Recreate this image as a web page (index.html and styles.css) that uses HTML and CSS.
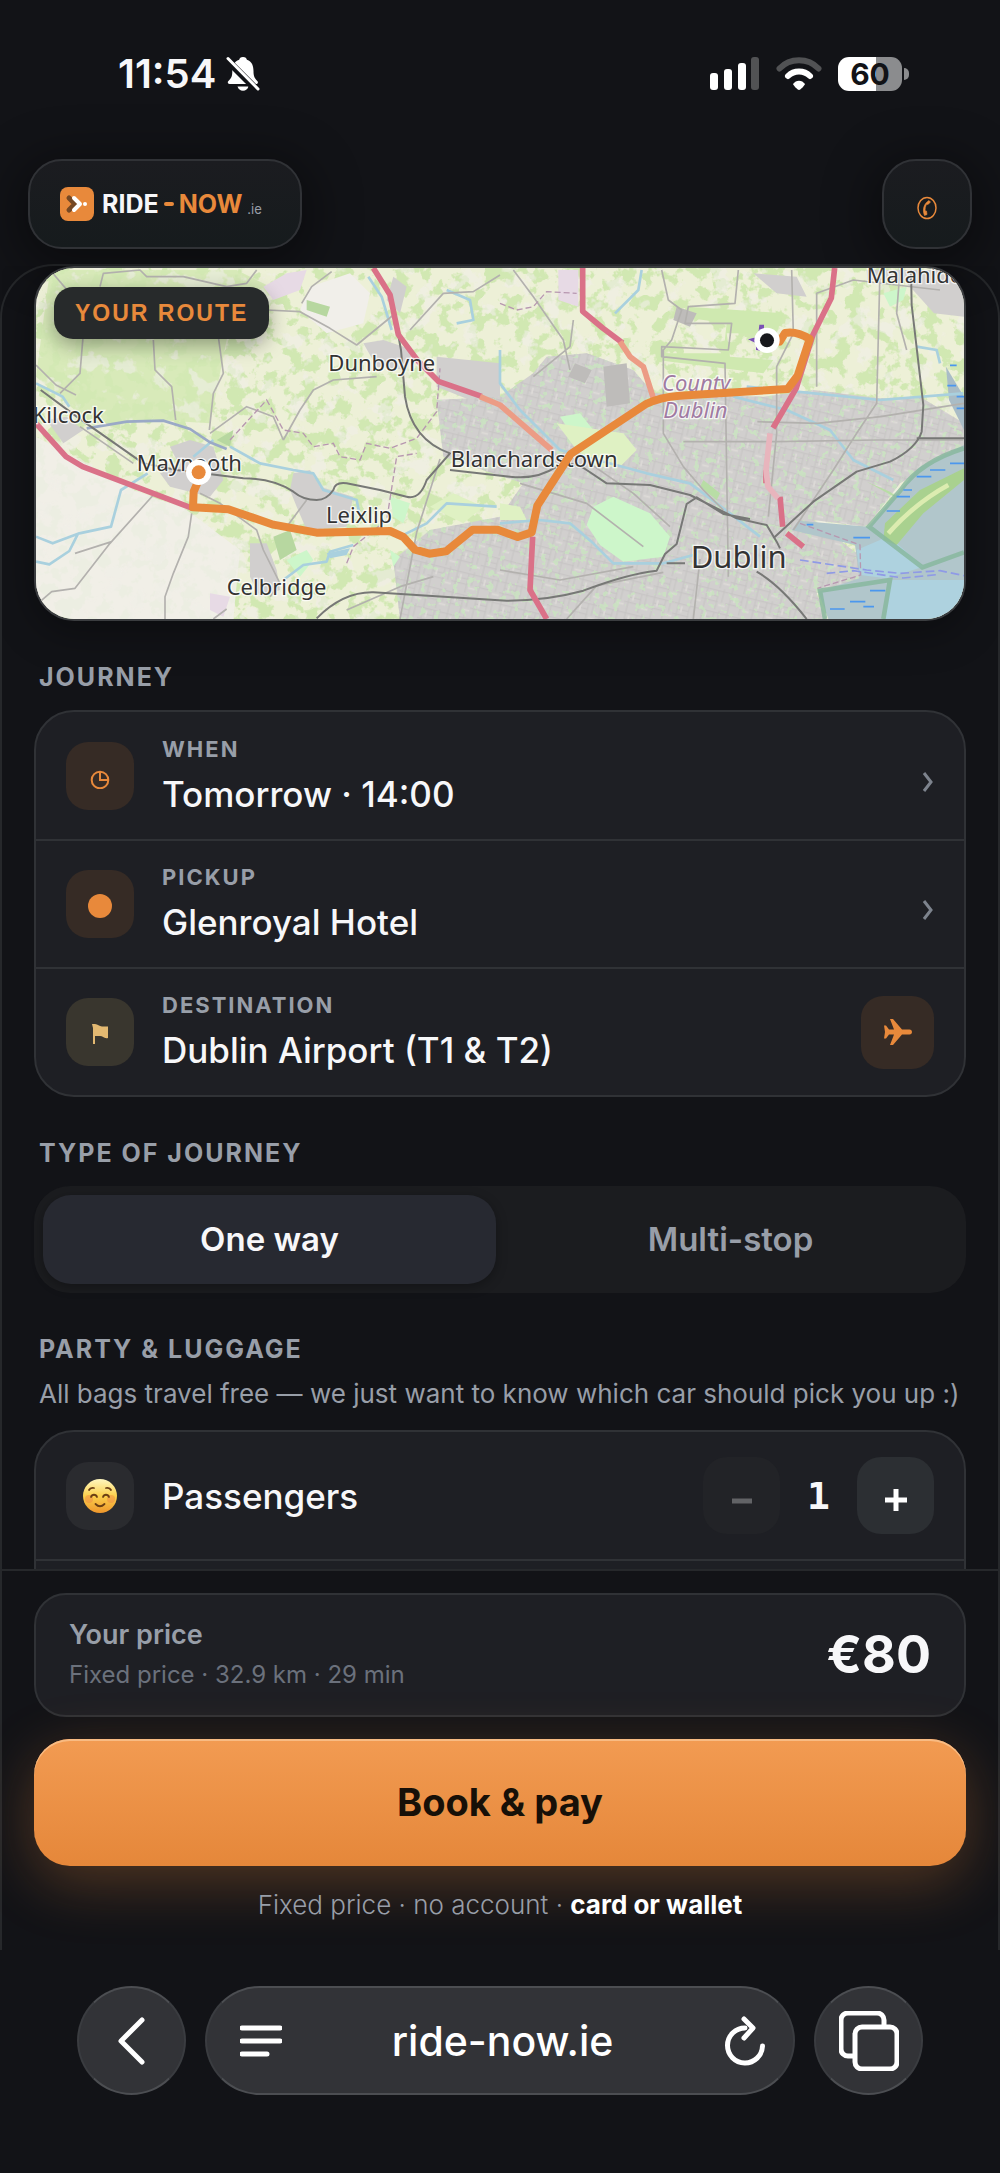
FILE: index.html
```html
<!DOCTYPE html>
<html lang="en">
<head>
<meta charset="utf-8">
<meta name="viewport" content="width=device-width, initial-scale=1">
<title>RIDE-NOW.ie</title>
<link rel="stylesheet" href="styles.css">
</head>
<body>
<div class="app">
  <div class="status">
    <div class="status-group">
      <span class="time">11:54</span>
      <svg width="34" height="36" viewBox="0 0 34 36" fill="#fff" aria-hidden="true">
        <path d="M17 1c2.500 0 3.600 1.400 3.900 2.700C26 5.200 27.500 10 27.500 15c0 6 1.500 7.500 4 10.200.9 1.200.3 2.800-1.200 2.800H3.500C2 28 1.200 26.400 2.200 25.200 5 22.500 6.300 21 6.300 15c0-5 1.700-9.800 6.900-11.300C13.500 2.400 14.500 1 17 1z"/>
        <path d="M11.500 30.500h11c-.7 2.500-2.800 4.200-5.500 4.200s-4.800-1.700-5.500-4.200z"/>
        <path d="M2 5l31 31" stroke="#121317" stroke-width="7"/>
        <path d="M2 2.500l30 30.500" stroke="#fff" stroke-width="3" stroke-linecap="round"/>
      </svg>
    </div>
    <div class="status-group status-right">
      <svg width="50" height="34" viewBox="0 0 50 34" fill="#fff" aria-hidden="true">
        <rect y="16" width="8" height="17" rx="3"/><rect x="14" y="12" width="8" height="21" rx="3"/>
        <rect x="28" y="6" width="8" height="27" rx="3"/><rect x="41" width="8" height="33" rx="3" fill="#515254"/>
      </svg>
      <svg width="46" height="34" viewBox="0 0 46 34" fill="none" stroke-linecap="round" aria-hidden="true">
        <path d="M3.500 11.500C14 .5 32 .5 42.500 11.500" stroke="#515254" stroke-width="6"/>
        <path d="M12 19c6-6 16-6 22 0" stroke="#fff" stroke-width="6"/>
        <path d="M17 27c3-4.500 9-4.500 12 0 0 1-4.500 6-6 6s-6-5-6-6z" fill="#fff"/>
      </svg>
      <div class="battery"><span class="battery-level">60</span></div>
    </div>
  </div>

  <header class="header">
    <a class="brand glass" href="#" aria-label="RIDE-NOW.ie">
      <svg width="34" height="34" viewBox="0 0 34 34" fill="none" aria-hidden="true">
        <rect width="34" height="34" rx="8" fill="#e8893b"/>
        <path d="M9 11l6 6-6 6" stroke="#754824" stroke-width="5" stroke-linecap="round" stroke-linejoin="round"/>
        <path d="M14 11l6 6-6 6" stroke="#fff" stroke-width="4" stroke-linecap="round" stroke-linejoin="round"/>
        <circle cx="25" cy="17" r="2" fill="#fff"/>
      </svg>
      <span class="brand-name">RIDE</span><span class="brand-dash"></span><span class="brand-name accent">NOW</span><span class="brand-tld">.ie</span>
    </a>
    <button class="call glass" type="button" aria-label="Call us">
      <svg width="22" height="24" viewBox="0 0 22 24" fill="none" stroke="#e8893b" aria-hidden="true">
        <ellipse cx="11" cy="12" rx="9" ry="10.500" stroke-width="1.500"/>
        <path d="M13 4.500c-5 3-7 9-4.500 15l2.500-1-.5-3.500-1.200.3c-.5-2.500 0-5 1.500-7.300l1.200.6 2.500-2.600z" fill="#e8893b" stroke-width=".6"/>
      </svg>
    </button>
  </header>

  <main class="sheet">
    <div class="scroll">
      <section class="map">
        <svg class="map-art" viewBox="108 54 2784 1053" preserveAspectRatio="xMidYMid slice" role="img" aria-label="Route map">
          <defs>
            <filter id="fields" x="0" y="0" width="100%" height="100%" color-interpolation-filters="sRGB">
              <feTurbulence type="fractalNoise" baseFrequency=".022" numOctaves="4" seed="8"/>
              <feColorMatrix values="0 0 0 0 .82  0 0 0 0 .91  0 0 0 0 .70  12 0 0 0 -6"/>
            </filter>
            <filter id="bare" x="0" y="0" width="100%" height="100%" color-interpolation-filters="sRGB">
              <feTurbulence type="fractalNoise" baseFrequency=".016" numOctaves="4" seed="31"/>
              <feColorMatrix values="0 0 0 0 .945  0 0 0 0 .935  0 0 0 0 .91  0 12 0 0 -7"/>
            </filter>
            <filter id="parks" x="0" y="0" width="100%" height="100%" color-interpolation-filters="sRGB">
              <feTurbulence type="fractalNoise" baseFrequency=".05" numOctaves="3" seed="4"/>
              <feColorMatrix values="0 0 0 0 .79  0 0 0 0 .91  0 0 0 0 .75  0 0 14 0 -8.400"/>
            </filter>
            <pattern id="streets" width="74" height="66" patternUnits="userSpaceOnUse" patternTransform="rotate(14)">
              <path d="M0 8H74M0 41H50M12 0V66M47 8V66M62 0V41M12 25H47" fill="none" stroke="#c6c4c3" stroke-width="3"/>
              <path d="M24 14v20M54 50h20" stroke="#dedbd8" stroke-width="5"/>
            </pattern>
            <clipPath id="town">
              <path d="M1310 450L1500 440 1600 370 1640 320 1760 310 1900 360 1960 430 2290 440 2440 420 2640 445 2760 440 2892 520V590L2700 700 2600 830 2440 810 2570 910 2580 985 2450 1030 2480 1107H1200L1180 930 1290 840 1500 800 1570 700 1330 620z"/>
            </clipPath>
          </defs>
          <rect x="108" y="54" width="2784" height="1053" fill="#edf0d7"/>
          <rect x="108" y="54" width="2784" height="1053" filter="url(#fields)"/>
          <path d="M108 560L400 720 560 780 720 900 700 1107H108z" fill="#f1efea" opacity=".85"/>
          <path d="M150 60h560l120 60-140 100-60 300-160-10-200 10-162-140z" fill="#d3e9b4" opacity=".85"/>
          <rect x="108" y="54" width="2784" height="1053" filter="url(#bare)" opacity=".6"/>
          <path d="M930 110l120-40 60 60-20 90-110 30-80-70z" fill="#f1efea"/>
          <path d="M920 150l70 20-10 30-60-20zM820 860l50-20 20 60-50 30zM650 570l50-30-10 50z" fill="#b7d7a0"/>
          <path d="M790 110l70-40 60-10-20 60-80 30zM1675 60h60v110l-60-20zM630 1030l60 10-20 60-40-20z" fill="#e7dae5"/>
          <g fill="#d1cfce">
            <path d="M1310 450L1500 440 1600 370 1640 320 1760 310 1900 360 1960 430 2290 440 2440 420 2640 445 2760 440 2892 520V590L2700 700 2600 830 2440 810 2570 910 2580 985 2450 1030 2480 1107H1200L1180 930 1290 840 1500 800 1570 700 1330 620z"/>
            <path d="M1310 320l190 20v100l-90 10-100-40zM1180 80l40 30-20 80-40-40zM510 590l60-20 70 20 30 100-40 50-120-30-30-40 60-20zM880 670l50-10 30 50 100 30-20 90-120 10-30-70-20-50zM750 880l50 0 30 80 10 60-60 20-30-60zM140 510l60-10 50 40-60 40zM2260 70l130 10 30 60-90-10zM2600 60h292v140l-90-10-90-100h-110zM1090 280l60-10 90 30-20 60-90-10z"/>
          </g>
          <g clip-path="url(#town)">
            <rect x="1170" y="300" width="1730" height="810" fill="url(#streets)"/>
            <rect x="1170" y="300" width="1730" height="810" filter="url(#parks)" opacity=".7"/>
          </g>
          <path d="M1780 770l60-30 110 50 60 70-20 60-120 15-70-50-40-60zM860 930l60-30 20 30-40 50zM1170 740l60 20-20 60-30-20zM1170 900l30 20-20 30zM2650 130l70-20-10 40-40 20zM1680 500l60-10 40 50-60 20z" fill="#cdf6ca"/>
          <path d="M1500 760l60 10 20 40-80 0zM1670 520l200 30 40 50-50 50-70 0-60-50zM1290 770l70-40 90 40-60 50z" fill="#dff1c3"/>
          <path d="M2060 170l150 10 140 10-20 60-150 0 10 70 130 10-30 40-320-40 10-20 190 0 10-90-140-20z" fill="#cfe9b0"/>
          <path d="M1810 350l70-10 10 120-70 10zM2030 170l60 20-20 40-50-20zM1725 340l50 20-20 40-50-20z" fill="#bebcba"/>
          <path d="M2600 695l70 30 40 30M2110 690l50 40-10 20-50-40z" fill="#b8dda5"/>

          <!-- water -->
          <path d="M2892 585L2760 650 2700 720 2605 830 2395 812 2375 840 2565 885 2578 985 2455 1025 2485 1107H2892z" fill="#b1c6cb"/>
          <path d="M2892 680L2770 780 2690 880 2770 950 2660 985 2580 975 2570 900 2640 870 2892 655zM2675 990H2892V1107H2655z" fill="#aed2df"/>
          <path d="M2892 655L2760 720 2655 820 2650 870 2690 885 2770 790 2892 690z" fill="#a9d18f"/>
          <path d="M2665 850q80-90 180-145" fill="none" stroke="#dcecb0" stroke-width="14"/>
          <path d="M2892 595q-130 40-190 125l-95 110 160 122 125-45M2475 1107l-15-85 210-32-20 117" fill="none" stroke="#86b79b" stroke-width="14" opacity=".8"/>
          <path d="M2838 350l54 90v100l-45-90z" fill="#a9bcc6"/>
          <g fill="none" stroke="#a9d0de" stroke-width="8" stroke-linejoin="round">
            <path d="M108 860l50 20 80-30 95-20 30-110 80-50M108 935l40 8 60-40 25-50M108 400l80 40 20 30M580 620l60-50"/>
            <path d="M690 590l90 50 100 20 60 10 30 50 100 30 10 50M1340 120l70 30 10 60-50 10M1105 80l40 60 30 100"/>
            <path d="M850 990l60-45 70-10 10-30 70-20M1200 860l80-40 60-60 150 10M1500 820l120-10 90 10 70 60 60 60 150 0 90-25"/>
            <path d="M1925 60l-10 60-70 70M1500 300l0 100 60 80 120 120 260 70 130 30 120 90 90 70M2200 440l160 40 130 60 70 90 120 60M2240 410l400 40 250-20M2750 290l60 10 10 40"/>
          </g>
          <path d="M980 910l70-15-10 20-50 10z" fill="#a9d0de"/>
          <path d="M260 535l120-20 110-3 80 25 60 40 50 20" fill="none" stroke="#9aa9c6" stroke-width="8"/>

          <!-- local roads -->
          <g fill="none" stroke="#b3b1ae" stroke-width="5" stroke-linejoin="round">
            <path d="M150 60l60 70 40 120-10 120-60 60M300 110l10-40 110-10 20 20 110 0 130 30 60-10 30-40M460 270l5 90 50 50 12 100M655 260l15 110-30 60-12 110M800 180l100 5 90 50 80 50 110-90M905 160l30-50 60-45"/>
            <path d="M630 550l110-80 80 30 30 70M850 570l50-90 40-60 60-30 130-10M108 345l60 60 60 30M240 530l160 110M460 735L330 880 225 1015l-70 10-47 40M575 790l-10 70-45 110-25 70v67M225 910l110-35M600 730l60 30 110 80 20 60 50 100-30 40M640 1107l40-30M860 830l60-80M1230 240l100-110 90-5 80-50"/>
            <path d="M1540 60l60 80 90 130 20 90M1720 210l-10 80-110 90M1985 60l20 90 40 30-30 90-25 30v250l60 100 60 70 60 60M2215 60l-10 100-140 10-10 50 140 0-10 80-200-10 0 30 190 20 10 640M2375 60l5 190-50 100 0 200-25 250M2640 60l-10 400-60 90-70 110-120 180M2450 410l0-280 110-40 260 30M2892 460l-250 40-190 20-180-5M2890 570h-260l-300 5-280 0"/>
            <path d="M1740 620l160 110 110 100M1560 700l200 60 170 130M1200 1107l50-260 70-220M1300 980l-100 30-160 70M1500 960l180 30 220-40M1700 1107l90-100 200-40M2080 1107l20-180M2700 60l-10 130 30 110"/>
          </g>
          <g fill="none" stroke="#b797b0" stroke-width="4" stroke-dasharray="18 9">
            <path d="M690 570l110-120 50 90 60 10 30 40 60-10 20 40 60 10 20-50 70 15 80-30 60-80 10-130M1500 160l50 20 50-10 40-45 90 5M1040 940l20-50 100-80 30-190 60-10M2400 820l180 65 2 90-130 40"/>
          </g>

          <!-- rail -->
          <g fill="none" stroke="#777876" stroke-width="6" stroke-linejoin="round">
            <path d="M1183 190l20 110 12 140q20 130 135 170l-70 80q-20 60-60 50l-80-20-100-20q-35-5-40 20-20 30-50 30-40 0-70-25-60-40-150-40l-200-25-100-20-200-140-108-80"/>
            <path d="M1350 660l180 20q80 10 140-30 50-20 90 10l60 40 130 5 120 30 140 70 90 20 30 50 10 20M950 1105q80-80 170-78l400 25q120 0 230-30 130-50 220-60l25-50 35-30 30-120 30-20 80 50 80 15M2000 940h55M2320 865l120-110 130-90 100-30q80-40 95-90l5-80-35-300-2-105M2270 965q70 40 150 142M2750 565h142"/>
          </g>

          <!-- major roads -->
          <g fill="none" stroke="#da7188" stroke-width="17" stroke-linejoin="round">
            <path d="M108 520l90 100 50 30 330 125M1120 54l50 80 25 120 60 80 60 60 130 45M1748 54v130l60 50 60 45M2504 54l-10 90-55 110-50 160-70 120M1598 860l-8 160 50 87M2298 660v40M2340 740l8 90M2360 850l50 40"/>
            <path d="M2310 550l-12 110 6 50 30 35" stroke="#e8b5bd"/>
            <path d="M1440 440l60 25 155 135M1860 275l30 45 40 30 35 110" stroke="#ec9c85"/>
          </g>
          <path d="M2400 930l200 30 100 10 120-8 72 15M2480 970l80-8 150 22 100-10" fill="none" stroke="#8f9ae6" stroke-width="5" stroke-dasharray="26 12"/>
          <path d="M2850 640h42M2790 660h46M2750 680h44M2710 720h26M2690 740h40M2660 783h40M2560 863h50M2420 824h20M2490 1077h44M2550 1055h46M2610 1022h46M2590 1070h32M2850 346h20M2842 407h26M2870 440h22M2870 475h22" stroke="#4b97ee" stroke-width="5"/>

          <g class="map-labels">
            <text x="985" y="362">Dunboyne</text>
            <text x="98" y="518">Kilcock</text>
            <text x="410" y="664">Maynooth</text>
            <text x="978" y="820">Leixlip</text>
            <text x="680" y="1036">Celbridge</text>
            <text x="1352" y="652">Blanchardstown</text>
            <text x="2600" y="100">Malahide</text>
            <text class="city" x="2072" y="955">Dublin</text>
            <text class="county" x="1986" y="424">County</text>
            <text class="county" x="1990" y="505">Dublin</text>
          </g>

          <!-- route -->
          <path d="M596 690l-15 35-2 47 106 6 135 46 130 24 220-5 40 18 35 38 43 12 50-7 80-65h75l60 22 42-14 17-80 100-155 226-150q40-20 100-25l325-20 30-40 36-110q-40-25-74-18l-16 26" fill="none" stroke="#e8893b" stroke-width="24" stroke-linejoin="round" stroke-linecap="round"/>
          <path d="M2244 268l30-8 4-36 14 0 0 80-24-4v-20z" fill="#7a51b4"/>
          <circle cx="596" cy="667" r="38" fill="#fff"/><circle cx="596" cy="667" r="21" fill="#e8893b"/>
          <circle cx="2301" cy="271" r="38" fill="#fff"/><circle cx="2301" cy="271" r="21" fill="#17181c"/>
        </svg>
        <span class="map-tag">YOUR ROUTE</span>
      </section>

      <h2 class="title">JOURNEY</h2>
      <div class="card">
        <button class="row" type="button">
          <span class="tile tile-warm">
            <svg width="20" height="26" viewBox="0 0 20 26" fill="none" stroke="#e8893b" stroke-width="2" aria-hidden="true"><circle cx="10" cy="17" r="8.300"/><path d="M10 9v8h8"/></svg>
          </span>
          <span class="row-text"><span class="label">WHEN</span><span class="value">Tomorrow · 14:00</span></span>
          <svg class="chevron" width="12" height="20" viewBox="0 0 12 20" aria-hidden="true"><path d="M2 1l7 9-7 9"/></svg>
        </button>
        <button class="row" type="button">
          <span class="tile tile-warm">
            <svg width="24" height="28" viewBox="0 0 24 28" aria-hidden="true"><circle cx="12" cy="16" r="12" fill="#e8893b"/></svg>
          </span>
          <span class="row-text"><span class="label">PICKUP</span><span class="value">Glenroyal Hotel</span></span>
          <svg class="chevron" width="12" height="20" viewBox="0 0 12 20" aria-hidden="true"><path d="M2 1l7 9-7 9"/></svg>
        </button>
        <div class="row">
          <span class="tile tile-gold">
            <svg width="16" height="24" viewBox="0 0 16 24" fill="#e3b971" aria-hidden="true"><path d="M1 4h2v20H1zM0 4h3c3 0 4 2.500 7 2.500h6V18c-4 1-5-2-8-2H3z"/></svg>
          </span>
          <span class="row-text"><span class="label">DESTINATION</span><span class="value">Dublin Airport (T1 &amp; T2)</span></span>
          <button class="plane" type="button" aria-label="Flight details">
            <svg width="28" height="26" viewBox="0 0 28 26" fill="#e8893b" aria-hidden="true"><path d="M0 6.500h2L5 10.500h5L6 0h3l9 10.500h7.500c3.300 0 3.300 5 0 5H18L9 26H6l4-10.500H5l-3 4H0L1 13z"/></svg>
          </button>
        </div>
      </div>

      <h2 class="title">TYPE OF JOURNEY</h2>
      <div class="segments">
        <button class="segment segment-on" type="button" aria-pressed="true">One way</button>
        <button class="segment" type="button" aria-pressed="false">Multi-stop</button>
      </div>

      <h2 class="title title-tight">PARTY &amp; LUGGAGE</h2>
      <p class="note">All bags travel free — we just want to know which car should pick you up :)</p>
      <div class="card">
        <div class="row">
          <span class="tile">
            <svg width="34" height="34" viewBox="0 0 34 34" fill="none" aria-hidden="true">
              <defs><linearGradient id="face" x2="0" y2="1"><stop stop-color="#fff7c0"/><stop offset=".5" stop-color="#fbd04c"/><stop offset="1" stop-color="#ee962c"/></linearGradient></defs>
              <circle cx="17" cy="17" r="17" fill="url(#face)"/>
              <circle cx="6" cy="20" r="4" fill="#f08a45" opacity=".5"/><circle cx="28" cy="20" r="4" fill="#f08a45" opacity=".5"/>
              <path d="M8 18c1-3 5-3 6 0M20 18c1-3 5-3 6 0M12.500 25c3 3 6 3 9 0M6 11c1-2 3-2.500 5-2M28 11c-1-2-3-2.500-5-2" stroke="#6b3f14" stroke-width="1.800" stroke-linecap="round"/>
            </svg>
          </span>
          <span class="row-text"><span class="value">Passengers</span></span>
          <div class="stepper">
            <button class="step" type="button" aria-label="Fewer passengers" disabled><svg width="22" height="22" viewBox="0 0 22 22" aria-hidden="true"><path d="M1 16h20" stroke="#626366" stroke-width="5"/></svg></button>
            <output class="count">1</output>
            <button class="step" type="button" aria-label="More passengers"><svg width="22" height="32" viewBox="0 0 22 32" aria-hidden="true"><path d="M0 20h22M11 9v22" stroke="#fff" stroke-width="5"/></svg></button>
          </div>
        </div>
        <div class="row"><span class="tile"></span></div>
      </div>
    </div>

    <footer class="checkout">
      <div class="price">
        <div class="price-text"><span class="price-title">Your price</span><span class="price-meta">Fixed price · 32.9 km · 29 min</span></div>
        <strong class="amount">€80</strong>
      </div>
      <button class="pay" type="button">Book &amp; pay</button>
      <p class="terms">Fixed price · no account · <b>card or wallet</b></p>
    </footer>
  </main>

  <nav class="browser">
    <button class="orb" type="button" aria-label="Back">
      <svg width="34" height="48" viewBox="0 0 34 48" aria-hidden="true"><path d="M27 3L6 24l21 21"/></svg>
    </button>
    <div class="address">
      <button class="bare" type="button" aria-label="Page menu"><svg width="42" height="34" viewBox="0 0 42 34" aria-hidden="true"><path d="M2 4h38M2 17h38M2 30h25"/></svg></button>
      <button class="bare url" type="button">ride-now.ie</button>
      <button class="bare" type="button" aria-label="Reload"><svg width="42" height="50" viewBox="0 0 42 50" aria-hidden="true"><path d="M22 12a17.500 17.500 0 1 0 17.500 18M21 3l9 9-9 10"/></svg></button>
    </div>
    <button class="orb" type="button" aria-label="Tabs">
      <svg width="60" height="60" viewBox="0 0 60 60" aria-hidden="true"><rect x="16" y="16" width="42" height="42" rx="7"/><path d="M15 45H9a7 7 0 0 1-7-7V9a7 7 0 0 1 7-7h29a7 7 0 0 1 7 7v6"/></svg>
    </button>
  </nav>
</div>
</body>
</html>
```
FILE: styles.css
```css
:root {
  --bg: #121317;
  --card: #1e1f24;
  --line: #303236;
  --edge: #26282b;
  --accent: #e8893b;
  --text: #f7f7f9;
  --muted: #989ea8;
  --dim: #6b717c;
}
* { box-sizing: border-box; }
body {
  margin: 0;
  background: var(--bg);
  color: var(--text);
  font-family: Inter, "Liberation Sans", sans-serif;
}
button { font: inherit; color: inherit; border: 0; padding: 0; background: none; }
h2, p { margin: 0; }
svg { display: block; flex: none; }

.app { display: flex; flex-direction: column; height: 100vh; }

.status { display: flex; justify-content: space-between; padding: 50px 90px 61px 118px; }
.status-group { display: flex; align-items: center; gap: 10px; height: 48px; }
.status-right { gap: 16px; }
.time { font-size: 40px; font-weight: 600; line-height: 48px; }
.battery {
  position: relative;
  width: 64px;
  height: 34px;
  margin-right: 8px;
  border-radius: 11px;
  background: linear-gradient(90deg, #fff 60%, #8b8c8e 60%);
  color: var(--bg);
  font-size: 30px;
  font-weight: 700;
  line-height: 34px;
  text-align: center;
}
.battery::after {
  content: "";
  position: absolute;
  right: -7px;
  top: 11px;
  width: 5px;
  height: 12px;
  border-radius: 0 6px 6px 0;
  background: #8b8c8e;
}

.header { position: relative; display: flex; justify-content: space-between; padding: 0 28px; margin-bottom: 15px; }
.glass {
  display: flex;
  align-items: center;
  height: 90px;
  border: 2px solid var(--line);
  border-radius: 34px;
  background: linear-gradient(#1b1c20, #161b1d);
  box-shadow: 0 10px 50px 10px rgba(0, 0, 0, .4);
}
.brand { padding: 0 38px 0 30px; color: var(--text); text-decoration: none; }
.brand-name { margin-left: 8px; font-size: 25px; font-weight: 700; }
.brand-dash { width: 10px; height: 4px; margin-left: 5px; border-radius: 2px; background: var(--accent); }
.accent { margin-left: 5px; color: var(--accent); }
.brand-tld { margin: 10px 0 0 5px; color: var(--muted); font-size: 13px; }
.call { justify-content: center; width: 90px; padding-top: 8px; }

.sheet {
  display: flex;
  flex: 1;
  flex-direction: column;
  min-height: 0;
  border: solid var(--edge);
  border-width: 2px 2px 0;
  border-radius: 54px 54px 0 0;
}
.scroll { flex: 1; min-height: 0; overflow: hidden; padding: 0 32px; }
.map {
  position: relative;
  overflow: hidden;
  border: 2px solid #3b3d40;
  border-radius: 40px;
  box-shadow: 0 10px 40px rgba(0, 0, 0, .35);
}
.map-art { width: 100%; height: auto; }
.map-labels { fill: #333; stroke: #fff; stroke-opacity: .8; stroke-width: 8px; paint-order: stroke; font-family: "Noto Sans", sans-serif; font-size: 66px; }
.city { font-size: 93px; }
.county { fill: #a07ba2; font-style: italic; font-size: 66px; }
.map-tag {
  position: absolute;
  left: 18px;
  top: 19px;
  padding: 0 21px;
  border-radius: 19px;
  background: #272a2b;
  box-shadow: 0 6px 20px rgba(0, 0, 0, .35);
  color: var(--accent);
  font-family: "Liberation Sans", Arial, sans-serif;
  font-size: 23px;
  font-weight: 700;
  letter-spacing: 2px;
  line-height: 52px;
}

.title {
  padding: 0 5px;
  margin: 40px 0 17px;
  color: var(--muted);
  font-size: 25px;
  font-weight: 700;
  letter-spacing: 2px;
  line-height: 32px;
}
.title-tight { margin-bottom: 11px; }
.note { padding: 0 5px 18px; color: var(--muted); font-size: 26px; font-weight: 400; line-height: 36px; white-space: nowrap; }

.card { overflow: hidden; border: 2px solid var(--line); border-radius: 40px; background: var(--card); }
.row { display: flex; align-items: center; gap: 28px; width: 100%; min-height: 127px; padding: 0 30px; text-align: left; }
.row + .row { border-top: 2px solid var(--line); min-height: 128px; }
.tile { display: flex; flex: none; align-items: center; justify-content: center; width: 68px; height: 68px; border-radius: 22px; background: #2a2b2f; }
.tile-warm { background: #362b25; }
.tile-gold { background: #39362e; }
.row-text { display: flex; flex: 1; flex-direction: column; gap: 6px; }
.label { color: var(--muted); font-size: 22px; font-weight: 700; letter-spacing: 2px; line-height: 30px; }
.value { font-size: 35px; font-weight: 500; line-height: 48px; }
.chevron { margin-top: 12px; fill: none; stroke: #7d838d; stroke-width: 3; }
.plane { display: flex; align-items: center; justify-content: center; width: 73px; height: 73px; border-radius: 22px; background: #362b25; }

.segments { display: flex; gap: 8px; padding: 9px; border-radius: 36px; background: #1b1c1f; }
.segment { flex: 1; border-radius: 28px; color: var(--muted); font-size: 33px; font-weight: 600; line-height: 89px; }
.segment-on { background: #272931; box-shadow: 0 3px 12px rgba(0, 0, 0, .3); color: var(--text); }

.stepper { display: flex; align-items: center; }
.step { display: flex; align-items: center; justify-content: center; width: 77px; height: 77px; border-radius: 24px; background: #2c2f33; }
.step:disabled { background: #222327; }
.count { width: 77px; font-family: "DejaVu Sans Mono", monospace; font-size: 38px; font-weight: 700; text-align: center; }

.checkout { padding: 22px 32px 26px; border-top: 2px solid var(--edge); }
.price {
  display: flex;
  align-items: center;
  justify-content: space-between;
  padding: 20px 33px;
  margin-bottom: 22px;
  border: 2px solid var(--line);
  border-radius: 32px;
  background: var(--card);
}
.price-text { display: flex; flex-direction: column; color: var(--dim); font-size: 24px; line-height: 40px; }
.price-title { color: var(--muted); font-size: 27px; font-weight: 600; }
.amount { font-size: 52px; font-weight: 700; line-height: 60px; }
.pay {
  width: 100%;
  border-radius: 36px;
  background: linear-gradient(#f29b52, #e5873a);
  box-shadow: inset 0 2px 0 #f8bb83, 0 16px 60px rgba(232, 137, 59, .3);
  color: #171008;
  font-size: 38px;
  font-weight: 700;
  line-height: 127px;
}
.terms { padding-top: 20px; color: var(--muted); font-size: 26px; font-weight: 300; line-height: 38px; text-align: center; }
.terms b { color: #fff; font-weight: 700; }

.browser { display: flex; gap: 19px; padding: 36px 77px 78px; }
.orb, .address {
  display: flex;
  align-items: center;
  justify-content: center;
  height: 109px;
  border: 2px solid #4c4e52;
  border-inline-color: #3a3c40;
  border-radius: 55px;
  background: #323337;
}
.orb { flex: none; width: 109px; }
.address { flex: 1; justify-content: space-between; padding: 0 28px 0 33px; }
.bare { display: flex; }
.url { color: #fff; font-size: 41px; font-weight: 500; line-height: 50px; }
.browser svg { fill: none; stroke: #fff; stroke-width: 5; stroke-linecap: round; stroke-linejoin: round; }
```
